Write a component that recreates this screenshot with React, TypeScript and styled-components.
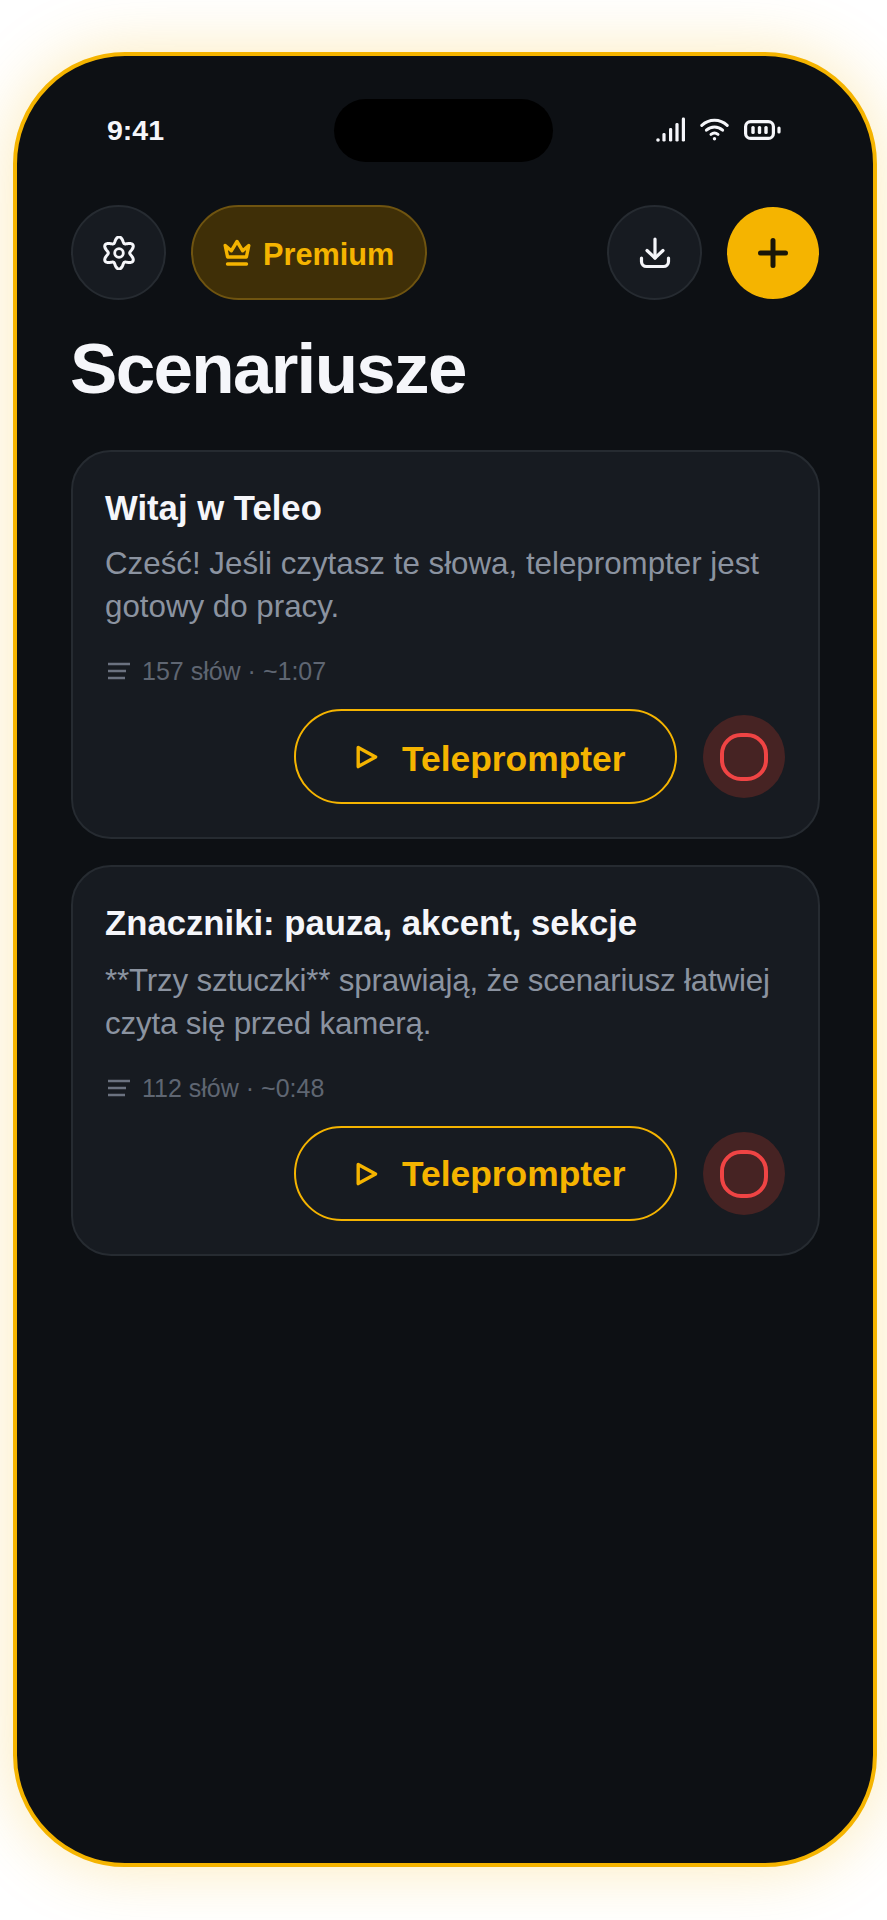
import React from 'react';
import styled, { createGlobalStyle } from 'styled-components';

const GOLD = '#f5b400';
const SANS = '"Liberation Sans", Arial, Helvetica, sans-serif';

const Global = createGlobalStyle`
  html, body { margin: 0; padding: 0; background: #ffffff; }
  body { font-family: ${SANS}; }
`;

const Page = styled.div`
  width: 887px;
  height: 1920px;
  padding: 52px 10px 0 13px;
  box-sizing: border-box;
  overflow: hidden;
`;

const Phone = styled.main`
  width: 864px;
  height: 1815px;
  box-sizing: border-box;
  border: 4px solid ${GOLD};
  border-radius: 112px;
  background: #0d1014;
  box-shadow: 0 0 66px rgba(245, 180, 0, 0.28);
  padding: 0 53px 0 54px;
`;

const StatusBar = styled.div`
  height: 149px;
  display: flex;
  align-items: flex-start;
  color: #f5f6fa;
`;

const Time = styled.span`
  margin: 58px 0 0 36px;
  width: 227px;
  font-size: 28.5px;
  line-height: 32px;
  font-weight: 700;
`;

const Island = styled.div`
  margin-top: 43px;
  width: 219px;
  height: 63px;
  border-radius: 32px;
  background: #000;
`;

const StatusIcons = styled.div`
  margin: 61px 0 0 103px;
  display: flex;
  align-items: center;
  gap: 15px;
`;

const Toolbar = styled.div`
  display: flex;
  align-items: center;
  height: 95px;
  padding-right: 1px;
`;

const RoundButton = styled.button`
  width: 95px;
  height: 95px;
  flex: none;
  padding: 0;
  display: flex;
  align-items: center;
  justify-content: center;
  box-sizing: border-box;
  border-radius: 50%;
  border: 2px solid #262b31;
  background: #171b21;
  color: #f5f6fa;
`;

const PremiumButton = styled.button`
  margin-left: 25px;
  width: 236px;
  height: 95px;
  box-sizing: border-box;
  padding: 0 0 0 30px;
  display: flex;
  align-items: center;
  gap: 12px;
  border-radius: 48px;
  border: 2px solid #6f5410;
  background: #3f2f07;
  color: ${GOLD};
  font-family: ${SANS};
  font-size: 30.7px;
  font-weight: 700;
`;

const PremiumLabel = styled.span`
  padding-top: 4px;
`;

const Spacer = styled.div`
  flex: 1;
`;

const AddButton = styled.button`
  margin-left: 25px;
  width: 92px;
  height: 92px;
  flex: none;
  padding: 0;
  display: flex;
  align-items: center;
  justify-content: center;
  border: none;
  border-radius: 50%;
  background: ${GOLD};
  color: #1a1608;
`;

const Title = styled.h1`
  margin: 27px 0 0 -1px;
  font-size: 71px;
  line-height: 84px;
  font-weight: 700;
  letter-spacing: -1.7px;
  color: #f5f6fa;
`;

const List = styled.div`
  margin-top: 39px;
  display: flex;
  flex-direction: column;
  gap: 26px;
`;

const Card = styled.article`
  box-sizing: border-box;
  width: 749px;
  padding: 35px 33px 33px 32px;
  border: 2px solid #262b31;
  border-radius: 40px;
  background: #171b21;
`;

const CardTitle = styled.h2`
  margin: 0;
  font-size: 34.7px;
  line-height: 42px;
  font-weight: 700;
  color: #f5f6fa;
`;

const CardText = styled.p<{ $gap: number; $tracking: number }>`
  margin: ${(p) => p.$gap}px 0 0;
  font-size: 31.3px;
  line-height: 43px;
  letter-spacing: ${(p) => p.$tracking}px;
  color: #8b93a0;
`;

const Meta = styled.div`
  margin-top: 27px;
  display: flex;
  align-items: center;
  gap: 11px;
  font-size: 25px;
  line-height: 32px;
  color: #5f6672;
`;

const Actions = styled.div`
  margin-top: 22px;
  display: flex;
  align-items: center;
  justify-content: flex-end;
  gap: 26px;
`;

const PlayButton = styled.button`
  width: 383px;
  height: 95px;
  box-sizing: border-box;
  padding: 0 0 0 60px;
  display: flex;
  align-items: center;
  gap: 24px;
  border: 2.5px solid ${GOLD};
  border-radius: 48px;
  background: transparent;
  color: ${GOLD};
  font-family: ${SANS};
  font-size: 35.4px;
  font-weight: 700;
`;

const PlayLabel = styled.span<{ $drop: number }>`
  padding-top: ${(p) => p.$drop}px;
`;

const RecordButton = styled.button`
  width: 82px;
  height: 83px;
  padding: 0;
  display: flex;
  align-items: center;
  justify-content: center;
  border: none;
  border-radius: 50%;
  background: #462323;
`;

const RecordMark = styled.span`
  width: 48px;
  height: 48px;
  box-sizing: border-box;
  border: 4.5px solid #ef4444;
  border-radius: 21px;
`;

const SignalIcon = () => (
  <svg width="29" height="25" viewBox="0 0 29 25" fill="#f5f6fa">
    <circle cx="2" cy="23" r="1.8" />
    <rect x="6.4" y="16" width="3.2" height="8.6" rx="1.4" />
    <rect x="13" y="11" width="3.2" height="13.6" rx="1.4" />
    <rect x="19.4" y="6" width="3.2" height="18.6" rx="1.4" />
    <rect x="25.8" y="0.5" width="3.2" height="24.1" rx="1.4" />
  </svg>
);

const WifiIcon = () => (
  <svg width="29" height="23" viewBox="0 0 29 23" fill="none" stroke="#f5f6fa" strokeWidth="3" strokeLinecap="round">
    <path d="M1.8 7.4C9 .6 20 .6 27.2 7.4" />
    <path d="M6.4 12.2c4.6-4.2 11.6-4.2 16.2 0" />
    <path d="M11 16.4c2.1-1.6 4.9-1.6 7 0" />
    <circle cx="14.5" cy="20.8" r="1.7" fill="#f5f6fa" stroke="none" />
  </svg>
);

const BatteryIcon = () => (
  <svg width="37" height="20" viewBox="0 0 37 20" fill="#f5f6fa">
    <rect x="1.6" y="1.6" width="27.8" height="16.8" rx="5" fill="none" stroke="#f5f6fa" strokeWidth="3.2" />
    <rect x="7.3" y="6" width="3.4" height="8" rx="1.5" />
    <rect x="13.8" y="6" width="3.4" height="8" rx="1.5" />
    <rect x="20.3" y="6" width="3.4" height="8" rx="1.5" />
    <rect x="33.4" y="6.5" width="3.2" height="7" rx="1.6" />
  </svg>
);

const gearOutline = (() => {
  const points: string[] = [];
  for (let i = 0; i < 180; i += 1) {
    const a = (i / 180) * Math.PI * 2;
    const r = 13.4 - 2.7 * Math.cos(6 * a);
    points.push(`${(17 + r * Math.cos(a)).toFixed(2)} ${(17 + r * Math.sin(a)).toFixed(2)}`);
  }
  return `M${points.join('L')}Z`;
})();

const GearIcon = () => (
  <svg width="34" height="34" viewBox="0 0 34 34" fill="none" stroke="currentColor" strokeWidth="3">
    <path d={gearOutline} strokeLinejoin="round" />
    <circle cx="17" cy="17" r="4.3" strokeWidth="2.8" />
  </svg>
);

const CrownIcon = () => (
  <svg width="28" height="27" viewBox="0 0 28 27" fill="none" stroke="currentColor" strokeWidth="3.4" strokeLinejoin="round" strokeLinecap="round">
    <path d="M2.2 6.5 8.3 11.8 14 2.5l5.7 9.3 6.1-5.3L23.4 18H4.6Z" />
    <path d="M4.5 25h19" />
  </svg>
);

const DownloadIcon = () => (
  <svg width="32" height="32" viewBox="0 0 32 32" fill="none" stroke="currentColor" strokeWidth="3.2" strokeLinecap="round" strokeLinejoin="round">
    <path d="M16 2v19" />
    <path d="M8 13.5 16 21l8-7.5" />
    <path d="M2.5 21v3.5a5 5 0 0 0 5 5h17a5 5 0 0 0 5-5V21" />
  </svg>
);

const PlusIcon = () => (
  <svg width="30" height="30" viewBox="0 0 30 30" fill="none" stroke="currentColor" strokeWidth="5" strokeLinecap="round">
    <path d="M15 2.5v25M2.5 15h25" />
  </svg>
);

const PlayIcon = () => (
  <svg width="22" height="24" viewBox="0 0 22 24" fill="none" stroke={GOLD} strokeWidth="3.4" strokeLinejoin="round">
    <path d="M2.2 2.4 19.6 12 2.2 21.6Z" />
  </svg>
);

const LinesIcon = () => (
  <svg width="26" height="18" viewBox="0 0 26 18" fill="none" stroke="#6b7280" strokeWidth="2.6">
    <path d="M3 2h22M3 9h18M3 16h17" />
  </svg>
);

const scripts = [
  {
    title: 'Witaj w Teleo',
    text: 'Cześć! Jeśli czytasz te słowa, teleprompter jest gotowy do pracy.',
    meta: '157 słów · ~1:07',
    gap: 13,
    tracking: 0,
    drop: 5,
  },
  {
    title: 'Znaczniki: pauza, akcent, sekcje',
    text: '**Trzy sztuczki** sprawiają, że scenariusz łatwiej czyta się przed kamerą.',
    meta: '112 słów · ~0:48',
    gap: 15,
    tracking: -0.18,
    drop: 2,
  },
];

export default function App() {
  return (
    <Page>
      <Global />
      <Phone>
        <StatusBar>
          <Time>9:41</Time>
          <Island />
          <StatusIcons>
            <SignalIcon />
            <WifiIcon />
            <BatteryIcon />
          </StatusIcons>
        </StatusBar>
        <Toolbar>
          <RoundButton aria-label="Ustawienia">
            <GearIcon />
          </RoundButton>
          <PremiumButton>
            <CrownIcon />
            <PremiumLabel>Premium</PremiumLabel>
          </PremiumButton>
          <Spacer />
          <RoundButton aria-label="Pobierz">
            <DownloadIcon />
          </RoundButton>
          <AddButton aria-label="Dodaj">
            <PlusIcon />
          </AddButton>
        </Toolbar>
        <Title>Scenariusze</Title>
        <List>
          {scripts.map((s) => (
            <Card key={s.title}>
              <CardTitle>{s.title}</CardTitle>
              <CardText $gap={s.gap} $tracking={s.tracking}>{s.text}</CardText>
              <Meta>
                <LinesIcon />
                {s.meta}
              </Meta>
              <Actions>
                <PlayButton>
                  <PlayIcon />
                  <PlayLabel $drop={s.drop}>Teleprompter</PlayLabel>
                </PlayButton>
                <RecordButton aria-label="Nagraj">
                  <RecordMark />
                </RecordButton>
              </Actions>
            </Card>
          ))}
        </List>
      </Phone>
    </Page>
  );
}
